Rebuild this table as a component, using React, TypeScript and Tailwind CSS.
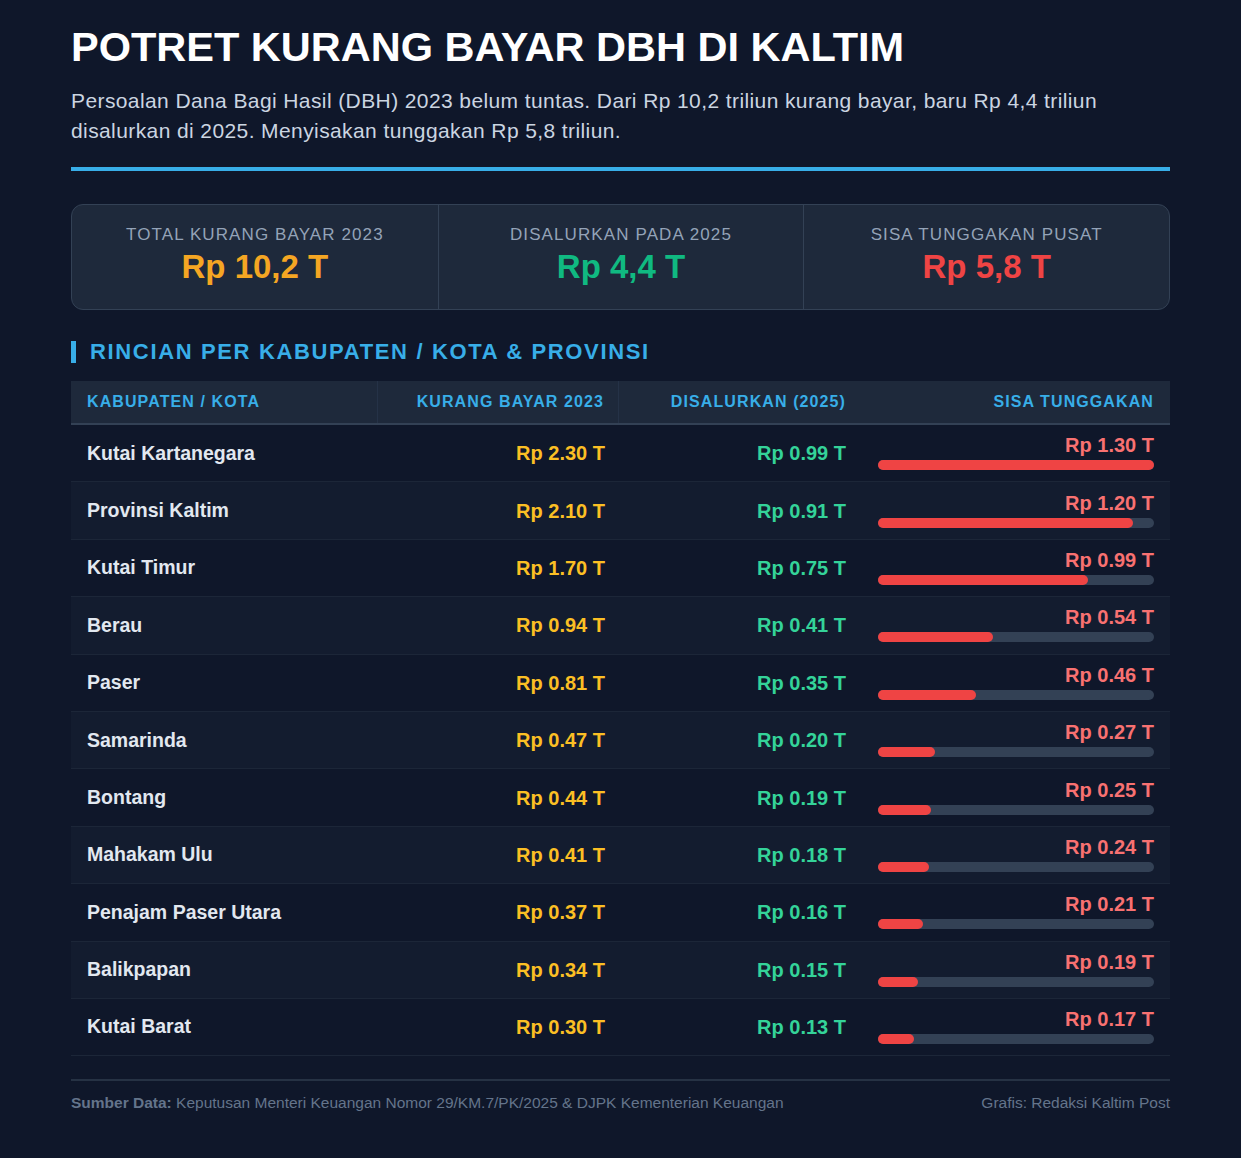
const rows: [string, number, number, number][] = [
  ["Kutai Kartanegara", 2.3, 0.99, 1.3],
  ["Provinsi Kaltim", 2.1, 0.91, 1.2],
  ["Kutai Timur", 1.7, 0.75, 0.99],
  ["Berau", 0.94, 0.41, 0.54],
  ["Paser", 0.81, 0.35, 0.46],
  ["Samarinda", 0.47, 0.2, 0.27],
  ["Bontang", 0.44, 0.19, 0.25],
  ["Mahakam Ulu", 0.41, 0.18, 0.24],
  ["Penajam Paser Utara", 0.37, 0.16, 0.21],
  ["Balikpapan", 0.34, 0.15, 0.19],
  ["Kutai Barat", 0.3, 0.13, 0.17],
];

const max = 1.3;
const fmt = (n: number) => `Rp ${n.toFixed(2)} T`;

const stats = [
  { label: "TOTAL KURANG BAYAR 2023", value: "Rp 10,2 T", color: "text-[#f5a623]" },
  { label: "DISALURKAN PADA 2025", value: "Rp 4,4 T", color: "text-[#10b981]" },
  { label: "SISA TUNGGAKAN PUSAT", value: "Rp 5,8 T", color: "text-[#ef4444]" },
];

export default function App() {
  return (
    <div className="min-h-[1158px] bg-[#0f172a] font-['Liberation_Sans',Arial,sans-serif]">
      <div className="w-[1099px] ml-[71px] pt-[23px] pb-[40px]">
        <h1 className="text-[41.5px] leading-[48px] font-bold text-white">
          POTRET KURANG BAYAR DBH DI KALTIM
        </h1>
        <p className="mt-[15px] text-[21px] leading-[30px] tracking-[0.4px] text-[#cbd5e1]">
          Persoalan Dana Bagi Hasil (DBH) 2023 belum tuntas. Dari Rp 10,2 triliun kurang bayar, baru Rp 4,4 triliun
          disalurkan di 2025. Menyisakan tunggakan Rp 5,8 triliun.
        </p>
        <div className="mt-[21px] h-[4px] bg-[#38aee8]" />

        <div className="mt-[33px] grid grid-cols-3 rounded-xl border border-[#334155] bg-[#1e293b]">
          {stats.map((s, i) => (
            <div
              key={s.label}
              className={`flex h-[104px] flex-col items-center justify-center pb-[4px] ${i > 0 ? "border-l border-[#334155]" : ""}`}
            >
              <div className="text-[17px] leading-[22px] tracking-[1.1px] text-[#94a3b8]">{s.label}</div>
              <div className={`mt-[2px] text-[33px] leading-[38px] font-bold ${s.color}`}>{s.value}</div>
            </div>
          ))}
        </div>

        <div className="mt-[25px] flex items-center gap-[14px]">
          <div className="h-[22px] w-[5px] bg-[#38aee8]" />
          <h2 className="text-[22px] font-bold tracking-[1.65px] text-[#38aee8]">
            RINCIAN PER KABUPATEN / KOTA &amp; PROVINSI
          </h2>
        </div>

        <div className="mt-[13px]">
          <div className="grid h-[44px] grid-cols-[307px_241px_243px_1fr] border-b-2 border-[#334155] bg-[#1e293b] text-[16px] font-bold tracking-[1.1px] text-[#38aee8]">
            <div className="flex items-center border-r border-[#253247] px-4">KABUPATEN / KOTA</div>
            <div className="flex items-center justify-end border-r border-[#253247] px-[14px]">KURANG BAYAR 2023</div>
            <div className="flex items-center justify-end px-4">DISALURKAN (2025)</div>
            <div className="flex items-center justify-end px-4">SISA TUNGGAKAN</div>
          </div>
          {rows.map(([name, kb, ds, sisa], i) => (
            <div
              key={name}
              className={`grid h-[57.4px] grid-cols-[307px_241px_243px_1fr] border-b border-[#1c2638] ${i % 2 === 1 ? "bg-[#131c2f]" : ""}`}
            >
              <div className="flex items-center px-4 text-[19.5px] font-bold text-[#e2e8f0]">{name}</div>
              <div className="flex items-center justify-end px-[14px] text-[20px] font-bold text-[#fbbf24]">{fmt(kb)}</div>
              <div className="flex items-center justify-end px-4 text-[20px] font-bold text-[#34d399]">{fmt(ds)}</div>
              <div className="flex flex-col justify-center px-4 pb-[2px]">
                <div className="text-right text-[20px] leading-[22px] font-bold text-[#f87171]">{fmt(sisa)}</div>
                <div className="mt-[4px] h-[10px] rounded-full bg-[#334155]">
                  <div className="h-full rounded-full bg-[#ef4444]" style={{ width: `${(sisa / max) * 100}%` }} />
                </div>
              </div>
            </div>
          ))}
        </div>

        <div className="mt-[23px] flex justify-between border-t-2 border-[#263244] pt-[12px] text-[15.5px] leading-[20px] text-[#64748b]">
          <div>
            <span className="font-bold">Sumber Data:</span> Keputusan Menteri Keuangan Nomor 29/KM.7/PK/2025 &amp; DJPK Kementerian Keuangan
          </div>
          <div>Grafis: Redaksi Kaltim Post</div>
        </div>
      </div>
    </div>
  );
}
